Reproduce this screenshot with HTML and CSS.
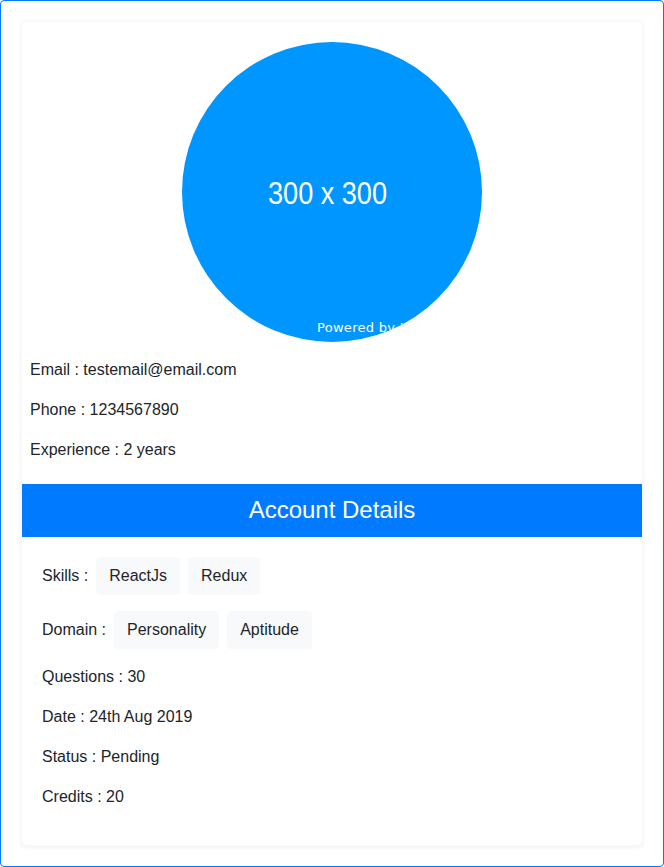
FILE: index.html
```html
<!DOCTYPE html>
<html lang="en">
<head>
<meta charset="utf-8">
<title>Profile</title>
<link rel="stylesheet" href="styles.css">
</head>
<body>
<div class="frame">
  <div class="card">
    <div class="profile">
      <svg class="avatar" width="300" height="300" viewBox="0 0 300 300" xmlns="http://www.w3.org/2000/svg">
        <defs>
          <clipPath id="c"><circle cx="150" cy="150" r="150"/></clipPath>
        </defs>
        <g clip-path="url(#c)">
          <rect width="300" height="300" fill="#0096ff"/>
          <text x="145.5" y="162" text-anchor="middle" font-family="Liberation Sans, Arial, sans-serif" font-size="32" fill="#ffffff" textLength="119" lengthAdjust="spacingAndGlyphs">300 x 300</text>
          <text x="135" y="290" font-family="DejaVu Sans, sans-serif" font-size="13" fill="#ffffff" letter-spacing="0.3">Powered by HTML.COM</text>
        </g>
      </svg>
      <p>Email : testemail@email.com</p>
      <p>Phone : 1234567890</p>
      <p>Experience : 2 years</p>
    </div>
    <div class="header">Account Details</div>
    <div class="details">
      <div class="row">
        <span class="label">Skills :</span>
        <span class="tag">ReactJs</span>
        <span class="tag">Redux</span>
      </div>
      <div class="row">
        <span class="label">Domain :</span>
        <span class="tag">Personality</span>
        <span class="tag">Aptitude</span>
      </div>
      <p>Questions : 30</p>
      <p>Date : 24th Aug 2019</p>
      <p>Status : Pending</p>
      <p>Credits : 20</p>
    </div>
  </div>
</div>
</body>
</html>
```
FILE: styles.css
```css
* { box-sizing: border-box; }
html, body { margin: 0; padding: 0; background: #fff; }
body {
  font-family: "Liberation Sans", Arial, sans-serif;
  font-size: 16px;
  line-height: 24px;
  color: #212529;
}
.frame {
  height: 867px;
  border: 1px solid #007bff;
  border-radius: 4px;
  padding: 20px;
}
.card {
  border: 1px solid rgba(0,0,0,0.02);
  border-radius: 6px;
  box-shadow: 0 1px 5px rgba(0,0,0,0.07);
  background: #fff;
  overflow: hidden;
}
.profile {
  padding: 20px 8px 22px;
}
.avatar {
  display: block;
  margin: 0 auto;
}
p { margin: 16px 0 0; }
.header {
  background: #007bff;
  color: #fff;
  font-size: 24px;
  line-height: 29px;
  padding: 11px 0 13px;
  text-align: center;
}
.details {
  padding: 20px 20px 20px;
}
.details p { margin: 0 0 16px; }
.row {
  display: flex;
  align-items: center;
  gap: 8px;
  margin-bottom: 16px;
}
.tag {
  background: #f8f9fa;
  border: 1px solid #f8f9fa;
  border-radius: 4px;
  padding: 6px 12px;
  line-height: 24px;
}
```
